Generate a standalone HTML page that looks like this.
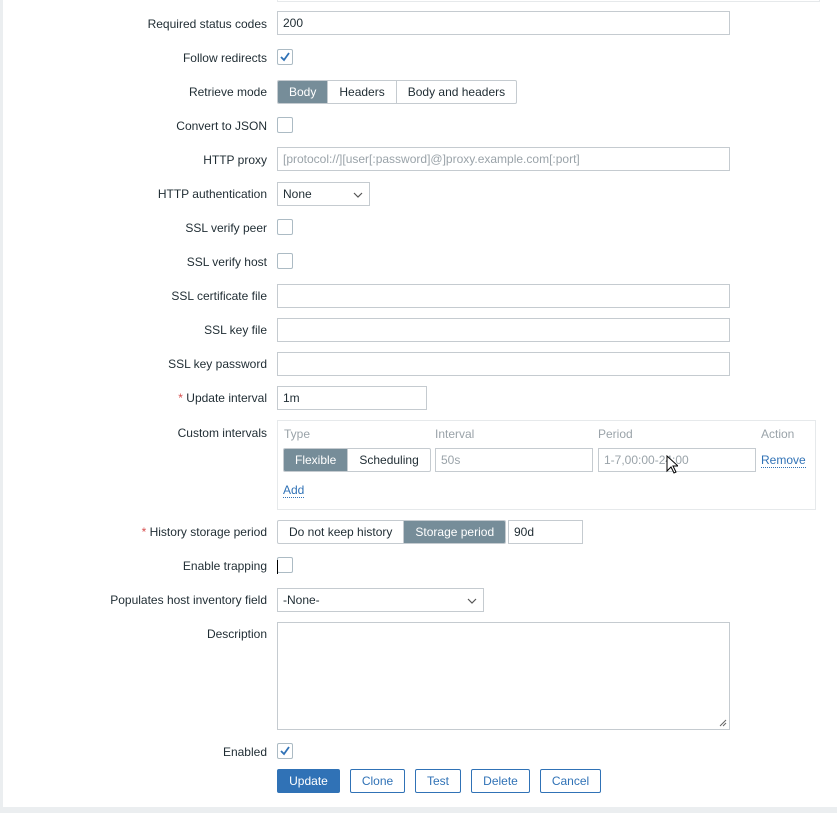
<!DOCTYPE html>
<html><head><meta charset="utf-8"><style>
*{box-sizing:border-box;margin:0;padding:0}
body{width:837px;height:813px;background:#ebeef0;font-family:"Liberation Sans",Arial,sans-serif;font-size:12px;color:#1f2c33;position:relative;overflow:hidden}
.panel{position:absolute;left:3px;top:0;width:834px;height:807px;background:#fff}
.a{position:absolute}
.lbl{position:absolute;right:570px;text-align:right;white-space:nowrap;line-height:14px;margin-top:1px}
.inp{position:absolute;border:1px solid #c5cbd0;background:#fff;height:24px;padding-left:5px;line-height:23px;white-space:nowrap}
.ph{color:#9aa3a9}
.cb{position:absolute;left:277px;width:16px;height:16px;border:1px solid #acbbc4;border-radius:2px;background:#fff}
.cb svg{position:absolute;left:2px;top:2px}
.seg{position:absolute;height:24px;display:flex;border:1px solid #c5cbd0;border-radius:2px;overflow:hidden}
.seg div{padding:0 11px;line-height:23px;border-left:1px solid #c5cbd0;white-space:nowrap}
.seg div:first-child{border-left:none}
.seg .on{background:#768d99;color:#fff}
.sel svg{position:absolute;right:6px;top:9px}
.btn{position:absolute;top:769px;height:24px;border:1px solid #3072b6;border-radius:2px;color:#3072b6;text-align:center;line-height:23px;background:#fff}
.req{color:#d64e4e}
.link{color:#3072b6;border-bottom:1px dotted #3072b6}
</style></head><body>
<div class="panel"></div>
<div class="a" style="left:277px;top:-1px;width:543px;height:3px;border:1px solid #e6e9eb;border-top:none"></div>

<div class="lbl" style="top:16px">Required status codes</div>
<div class="inp" style="left:277px;top:11px;width:453px">200</div>

<div class="lbl" style="top:50px">Follow redirects</div>
<div class="cb" style="top:49px"><svg width="10" height="10" viewBox="0 0 10 10"><path d="M1 5l3 3 5-7" fill="none" stroke="#3072b6" stroke-width="1.8"/></svg></div>

<div class="lbl" style="top:84px">Retrieve mode</div>
<div class="seg" style="left:277px;top:80px"><div class="on">Body</div><div>Headers</div><div>Body and headers</div></div>

<div class="lbl" style="top:118px">Convert to JSON</div>
<div class="cb" style="top:117px"></div>

<div class="lbl" style="top:152px">HTTP proxy</div>
<div class="inp ph" style="left:277px;top:147px;width:453px">[protocol://][user[:password]@]proxy.example.com[:port]</div>

<div class="lbl" style="top:186px">HTTP authentication</div>
<div class="inp sel" style="left:277px;top:182px;width:93px">None<svg width="10" height="6"><path d="M1 1l4 4 4-4" fill="none" stroke="#555" stroke-width="1.2"/></svg></div>

<div class="lbl" style="top:220px">SSL verify peer</div>
<div class="cb" style="top:219px"></div>
<div class="lbl" style="top:254px">SSL verify host</div>
<div class="cb" style="top:253px"></div>

<div class="lbl" style="top:288px">SSL certificate file</div>
<div class="inp" style="left:277px;top:284px;width:453px"></div>
<div class="lbl" style="top:322px">SSL key file</div>
<div class="inp" style="left:277px;top:318px;width:453px"></div>
<div class="lbl" style="top:356px">SSL key password</div>
<div class="inp" style="left:277px;top:352px;width:453px"></div>

<div class="lbl" style="top:390px"><span class="req">*</span> Update interval</div>
<div class="inp" style="left:277px;top:386px;width:150px">1m</div>

<div class="lbl" style="top:425px">Custom intervals</div>
<div class="a" style="left:277px;top:420px;width:539px;height:90px;border:1px solid #e6e9eb"></div>
<div class="a ph" style="left:284px;top:427px">Type</div>
<div class="a ph" style="left:435px;top:427px">Interval</div>
<div class="a ph" style="left:598px;top:427px">Period</div>
<div class="a ph" style="left:761px;top:427px">Action</div>
<div class="seg" style="left:283px;top:448px"><div class="on">Flexible</div><div>Scheduling</div></div>
<div class="inp ph" style="left:435px;top:448px;width:158px">50s</div>
<div class="inp ph" style="left:598px;top:448px;width:158px">1-7,00:00-24:00</div>
<div class="a" style="left:761px;top:454px;line-height:13px"><span class="link">Remove</span></div>
<div class="a" style="left:283px;top:484px;line-height:13px"><span class="link">Add</span></div>
<svg class="a" style="left:666px;top:455px" width="12" height="20" viewBox="0 0 12 20"><path d="M1 1v15l4-4 3 6 2-1-3-6h5z" fill="#fff" stroke="#000" stroke-width="1"/></svg>

<div class="lbl" style="top:524px"><span class="req">*</span> History storage period</div>
<div class="seg" style="left:277px;top:520px"><div>Do not keep history</div><div class="on">Storage period</div></div>
<div class="inp" style="left:508px;top:520px;width:75px">90d</div>

<div class="lbl" style="top:558px">Enable trapping</div>
<div class="cb" style="top:557px"></div>
<div class="a" style="left:277px;top:560px;width:1px;height:14px;background:#000"></div>

<div class="lbl" style="top:592px">Populates host inventory field</div>
<div class="inp sel" style="left:277px;top:588px;width:207px">-None-<svg width="10" height="6"><path d="M1 1l4 4 4-4" fill="none" stroke="#555" stroke-width="1.2"/></svg></div>

<div class="lbl" style="top:626px">Description</div>
<div class="inp" style="left:277px;top:622px;width:453px;height:108px"></div>
<svg class="a" style="left:719px;top:719px" width="8" height="8"><path d="M7 1L1 7M7 4L4 7" stroke="#666" stroke-width="1"/></svg>

<div class="lbl" style="top:744px">Enabled</div>
<div class="cb" style="top:743px"><svg width="10" height="10" viewBox="0 0 10 10"><path d="M1 5l3 3 5-7" fill="none" stroke="#3072b6" stroke-width="1.8"/></svg></div>

<div class="btn" style="left:277px;width:63px;background:#3072b6;color:#fff">Update</div>
<div class="btn" style="left:350px;width:55px">Clone</div>
<div class="btn" style="left:415px;width:46px">Test</div>
<div class="btn" style="left:471px;width:59px">Delete</div>
<div class="btn" style="left:540px;width:61px">Cancel</div>
</body></html>
